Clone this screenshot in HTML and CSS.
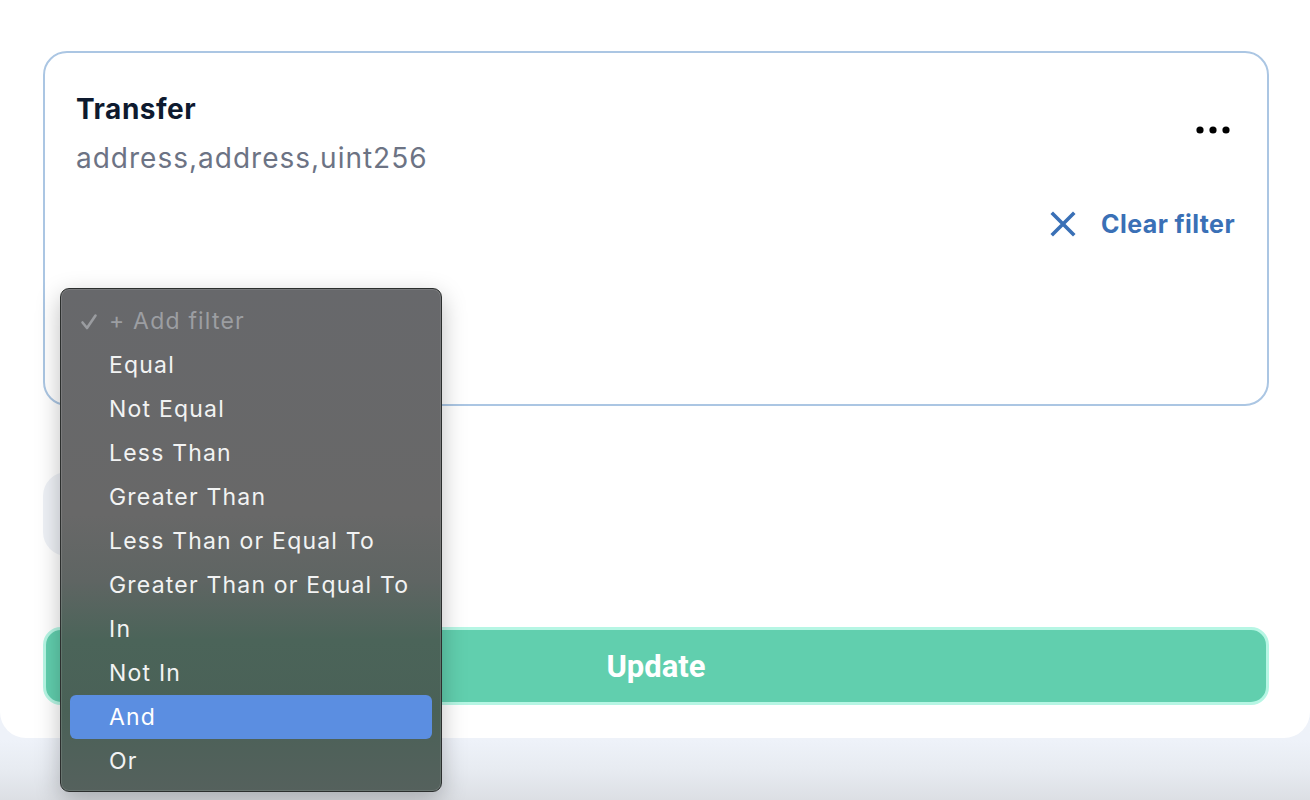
FILE: index.html
```html
<!DOCTYPE html>
<html lang="en">
<head>
<meta charset="utf-8">
<title>Event filter</title>
<link rel="stylesheet" href="styles.css">
</head>
<body>
<div class="panel">
  <section class="card">
    <div class="card-head">
      <div class="event">
        <div class="event-name">Transfer</div>
        <div class="event-sig">address,address,uint256</div>
      </div>
      <button class="more" aria-label="More">
        <svg width="34" height="8" viewBox="0 0 34 8"><circle cx="4" cy="4" r="3.6" fill="#000"/><circle cx="17" cy="4" r="3.6" fill="#000"/><circle cx="30" cy="4" r="3.6" fill="#000"/></svg>
      </button>
    </div>
    <div class="clear-row">
      <button class="clear">
        <svg width="26" height="26" viewBox="0 0 26 26"><path d="M3 3 L23 23 M23 3 L3 23" stroke="#3a70b6" stroke-width="3.6" stroke-linecap="square" fill="none"/></svg>
        <span>Clear filter</span>
      </button>
    </div>
  </section>
  <div class="ghost"></div>
  <button class="update">Update</button>
</div>

<ul class="menu">
  <li class="item placeholder"><svg class="check" width="18" height="18" viewBox="0 0 18 18"><path d="M2.5 9.5 L7 15 L15.5 2.5" stroke="#9a9ca0" stroke-width="2.6" fill="none" stroke-linecap="round" stroke-linejoin="round"/></svg>+ Add filter</li>
  <li class="item">Equal</li>
  <li class="item">Not Equal</li>
  <li class="item">Less Than</li>
  <li class="item">Greater Than</li>
  <li class="item">Less Than or Equal To</li>
  <li class="item">Greater Than or Equal To</li>
  <li class="item">In</li>
  <li class="item">Not In</li>
  <li class="item active">And</li>
  <li class="item">Or</li>
</ul>
</body>
</html>
```

FILE: styles.css
```css
* { box-sizing: border-box; }
html, body { margin: 0; padding: 0; }
body {
  width: 1310px;
  height: 800px;
  overflow: hidden;
  font-family: Inter, "Noto Sans", sans-serif;
  background: linear-gradient(180deg, #f1f5fb 0px, #eef2f9 740px, #e7ebf1 770px, #dcdfe4 800px);
  position: relative;
}
.panel {
  background: #fff;
  height: 738px;
  border-radius: 0 0 26px 26px;
  padding: 51px 41px 0 43px;
  display: flex;
  flex-direction: column;
}
.card {
  height: 355px;
  border: 2px solid #abc6e3;
  border-radius: 24px;
  padding: 36px 32px 0 31px;
  background: #fff;
}
.card-head {
  display: flex;
  justify-content: space-between;
  align-items: flex-start;
}
.event-name {
  font-size: 28px;
  font-weight: 700;
  color: #0e1a2f;
  line-height: 40px;
  letter-spacing: 0.5px;
}
.event-sig {
  font-size: 28px;
  color: #6c7384;
  line-height: 40px;
  margin-top: 9px;
  letter-spacing: 1px;
}
.more {
  border: 0;
  background: none;
  padding: 0;
  margin-top: 37px;
  margin-right: 5px;
  display: flex;
}
.clear-row {
  display: flex;
  justify-content: flex-end;
  margin-top: 31px;
}
.clear {
  border: 0;
  background: none;
  padding: 0;
  display: flex;
  align-items: center;
  gap: 25px;
  color: #3a70b6;
  font-family: Inter, "Noto Sans", sans-serif;
  font-size: 25px;
  font-weight: 700;
  letter-spacing: 0.4px;
  margin-right: 0;
}
.ghost {
  margin-top: 66px;
  height: 84px;
  width: 380px;
  border-radius: 24px;
  background: #eef1f6;
}
.update {
  margin-top: 71px;
  height: 78px;
  width: 100%;
  border: 3px solid #b6f6e4;
  border-radius: 18px;
  background: #61cfae;
  color: #fff;
  font-family: Roboto, Inter, sans-serif;
  font-size: 31px;
  font-weight: 700;
}
.menu {
  position: absolute;
  left: 60px;
  top: 288px;
  width: 382px;
  height: 504px;
  margin: 0;
  padding: 10px 9px 9px;
  list-style: none;
  border: 1px solid #2c2f2e;
  border-radius: 9px;
  background: linear-gradient(180deg, #67686b 0%, #686868 45%, #5f6563 58%, #4b6459 70%, #4a6157 84%, #55615d 100%);
  box-shadow: 0 8px 24px rgba(0,0,0,0.25), inset 0 0 0 1px rgba(255,255,255,0.12);
  font-family: Inter, "Noto Sans", sans-serif;
}
.item {
  height: 44px;
  line-height: 44px;
  padding-left: 39px;
  font-size: 23px;
  color: #f2f3f3;
  border-radius: 6px;
  position: relative;
  letter-spacing: 1.2px;
}
.placeholder { color: #9c9ea2; }
.check {
  position: absolute;
  left: 10px;
  top: 14px;
}
.active { background: #5b8ee1; color: #fff; }
```
